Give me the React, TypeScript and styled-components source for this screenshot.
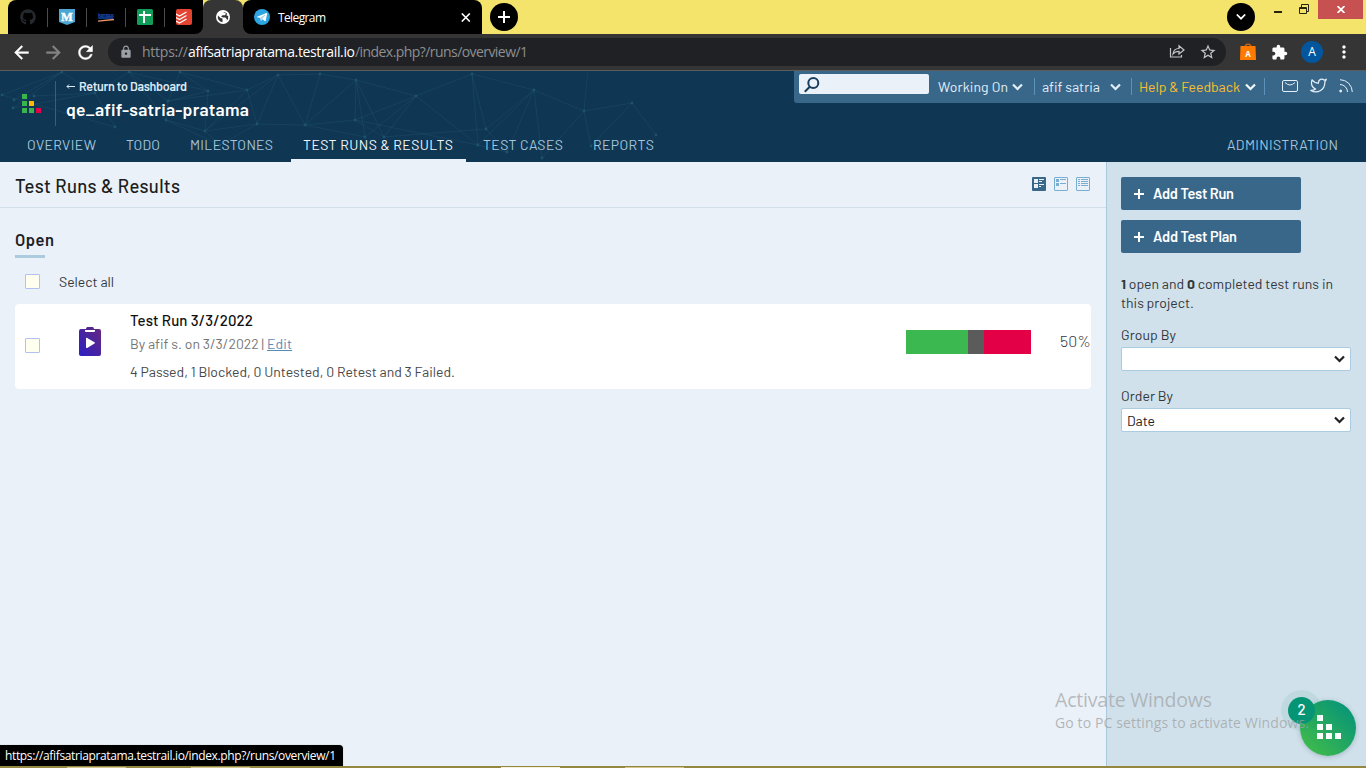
import React, { useLayoutEffect, useRef, useState } from "react";
import styled, { createGlobalStyle } from "styled-components";
import { MdArrowBack, MdArrowForward, MdRefresh, MdLock, MdStarBorder, MdExtension, MdMoreVert } from "react-icons/md";
import { FaGithub } from "react-icons/fa";
import { FiTwitter } from "react-icons/fi";

const ui = `"Barlow", Roboto, "Liberation Sans", sans-serif`;
const chrome = `"Segoe UI", "Open Sans", "Noto Sans", sans-serif`;

const GlobalStyle = createGlobalStyle`
  *, *::before, *::after { box-sizing: border-box; }
  html, body { margin: 0; padding: 0; overflow: hidden; }
  body { font-family: ${ui}; font-size: 14px; color: #33373c; background: #eaf1f8; }
  svg { display: block; flex: none; }
`;

/* Label that tracks its letters so the text fills a given width. */
const LabelBox = styled.span<{ $w: number }>`
  display: inline-block;
  width: ${(p) => p.$w}px;
  white-space: pre;
  flex: none;
`;
function Label({ w, children }: { w: number; children: React.ReactNode }) {
  const ref = useRef<HTMLSpanElement>(null);
  const [spacing, setSpacing] = useState(0);
  useLayoutEffect(() => {
    const el = ref.current;
    if (!el) return;
    const n = (el.textContent || "").length;
    if (n > 1) setSpacing((w - el.getBoundingClientRect().width) / (n - 1));
  }, [w]);
  return (
    <LabelBox $w={w}>
      <span ref={ref} style={{ letterSpacing: spacing }}>{children}</span>
    </LabelBox>
  );
}

const Screen = styled.div`
  position: relative;
  display: flex;
  flex-direction: column;
  width: 1366px;
  height: 768px;
  overflow: hidden;
`;

/* ---------- browser ---------- */
const TabStrip = styled.div`
  display: flex;
  height: 34px;
  padding-left: 8px;
  background: #f5e46c;
  font-family: ${chrome};
`;
const PinnedGroup = styled.div`
  display: flex;
  width: 195px;
  background: #000;
  border-radius: 8px 0 8px 0;
`;
const PinnedTab = styled.div`
  display: flex;
  align-items: center;
  justify-content: center;
  width: 39px;
  height: 34px;
  position: relative;
  & + &::before {
    content: "";
    position: absolute;
    left: 0;
    top: 8px;
    width: 1px;
    height: 19px;
    background: #4b4b4b;
  }
`;
const TabsBack = styled.div`
  display: flex;
  background: linear-gradient(#353535, #353535) 180px 8px / 80px 26px no-repeat;
`;
const CurrentTab = styled.div`
  display: flex;
  align-items: center;
  justify-content: center;
  width: 40px;
  background: #353535;
  border-radius: 8px 8px 0 0;
`;
const WideTab = styled.div`
  display: flex;
  align-items: center;
  width: 239px;
  padding: 0 10px 0 11px;
  background: #000;
  border-radius: 8px 8px 0 8px;
  color: #fff;
  font-size: 12px;
`;
const TabTitle = styled.div`
  flex: 1;
  padding-left: 8px;
`;
const RoundButton = styled.div<{ $ml: number }>`
  display: flex;
  align-items: center;
  justify-content: center;
  width: 28px;
  height: 28px;
  margin: 3px 0 0 ${(p) => p.$ml}px;
  border-radius: 50%;
  background: #000;
`;
const WindowButtons = styled.div`
  display: flex;
  margin-left: 17px;
`;
const CloseWindow = styled.div`
  display: flex;
  align-items: center;
  justify-content: center;
  width: 45px;
  height: 19px;
  background: #c75050;
`;
const Toolbar = styled.div`
  display: flex;
  align-items: center;
  height: 37px;
  padding-left: 11px;
  background: #353535;
  border-bottom: 1px solid #5b5b5b;
  font-family: ${chrome};
  color: #fff;
`;
const NavIcon = styled.div<{ $dim?: boolean }>`
  width: 32px;
  color: ${(p) => (p.$dim ? "#858585" : "#fff")};
  svg path:last-child { stroke: currentColor; stroke-width: 0.5px; }
`;
const AddressBar = styled.div`
  display: flex;
  align-items: center;
  width: 1118px;
  height: 28px;
  margin-left: 1px;
  padding: 0 9px 0 11px;
  border-radius: 14px;
  background: #202124;
  color: #9aa0a6;
  font-size: 14px;
`;
const Url = styled.div`
  display: flex;
  flex: 1;
  padding-left: 9px;
  margin-top: -1px;
  color: #8d8f93;
`;
const Domain = styled.span`
  color: #fff;
`;
const AddressIcons = styled.div`
  display: flex;
  gap: 14px;
  color: #c4c6c9;
`;
const Extensions = styled.div`
  display: flex;
  align-items: center;
  padding-left: 13px;
`;
const PuzzleSlot = styled.div`
  margin-left: 14px;
`;
const Avatar = styled.div`
  width: 22px;
  height: 22px;
  margin: 0 11px 0 13px;
  border-radius: 50%;
  background: #02569e;
  font-size: 12px;
  line-height: 22px;
  text-align: center;
`;

/* ---------- application header ---------- */
const Header = styled.header`
  position: relative;
  height: 91px;
  background: #0f3652;
  flex: none;
`;
const Network = styled.svg`
  position: absolute;
  left: 0;
  top: 0;
`;
const HeaderTop = styled.div`
  position: relative;
  display: flex;
  height: 57px;
  padding-left: 22px;
`;
const Logo = styled.svg`
  margin-top: 23px;
`;
const ProjectInfo = styled.div`
  height: 45px;
  margin: 10px 0 0 13px;
  padding-left: 10px;
  border-left: 1px solid #33617f;
  color: #fff;
`;
const BackLink = styled.div`
  display: flex;
  align-items: center;
  gap: 4px;
  margin-top: -3px;
  font-size: 12.5px;
  font-weight: 600;
  line-height: 17px;
  color: #dce9f5;
`;
const ProjectName = styled.div`
  margin-top: 3px;
  font-size: 17.5px;
  font-weight: 600;
  line-height: 22px;
`;
const UtilityBar = styled.div`
  display: flex;
  align-items: center;
  width: 572px;
  height: 32px;
  margin-left: auto;
  padding-left: 5px;
  background: #38678a;
  border-bottom-left-radius: 3px;
  color: #dce9f5;
  font-size: 14px;
`;
const SearchBox = styled.div`
  width: 130px;
  height: 20px;
  margin: -6px 9px 0 0;
  padding: 3px 0 0 5px;
  border-radius: 2px;
  background: #eaf1f8;
`;
const UtilityItem = styled.div<{ $w: number; $pr?: number; $accent?: boolean }>`
  display: flex;
  align-items: center;
  justify-content: space-between;
  width: ${(p) => p.$w}px;
  height: 18px;
  padding-right: ${(p) => p.$pr ?? 11}px;
  line-height: 18px;
  color: ${(p) => (p.$accent ? "#fbc02a" : "#e3eef8")};
  & > span { margin-top: -1px; }
`;
const HelpArrow = styled.div`
  color: #f2f7fb;
`;
const Separator = styled.div<{ $mr: number }>`
  width: 1px;
  height: 17px;
  margin: -1px ${(p) => p.$mr}px 0 0;
  background: #5c93bb;
`;
const SocialIcons = styled.div`
  display: flex;
  align-items: center;
  gap: 12px;
  margin-top: -3px;
  color: #e6f0f8;
`;
const Nav = styled.nav`
  position: relative;
  display: flex;
  height: 34px;
  padding: 0 15px;
`;
const NavTab = styled.div<{ $active?: boolean; $end?: boolean }>`
  height: 34px;
  padding: 0 13px 0 12px;
  margin-right: 5px;
  ${(p) => p.$end && "margin-left: auto; margin-right: 0;"}
  line-height: 33px;
  border-bottom: 3px solid ${(p) => (p.$active ? "#eaf1f8" : "transparent")};
  color: ${(p) => (p.$active ? "#f2f7fb" : "#a4c5dc")};
`;

/* ---------- page ---------- */
const Page = styled.div`
  display: flex;
  height: 604px;
`;
const Main = styled.main`
  width: 1106px;
  background: #eaf1f8;
`;
const TitleBar = styled.div`
  display: flex;
  align-items: center;
  justify-content: space-between;
  height: 46px;
  padding: 1px 16px 0 15px;
  border-bottom: 1px solid #d2dfe9;
  color: #1b1d20;
  font-size: 18.5px;
  font-weight: 500;
`;
const ViewIcons = styled.div`
  display: flex;
  gap: 8px;
  margin-top: -3px;
`;
const Runs = styled.section`
  padding: 22px 15px 0;
`;
const GroupTitle = styled.h2`
  display: flex;
  flex-direction: column;
  height: 28px;
  margin: 0;
  font-size: 16.5px;
  line-height: 19px;
  font-weight: 600;
  color: #1d2126;
  &::after {
    content: "";
    width: 30px;
    height: 3px;
    margin-top: 6px;
    background: #adcbdf;
  }
`;
const SelectAll = styled.div`
  display: flex;
  align-items: center;
  gap: 19px;
  height: 15px;
  margin: 16px 0 15px;
  padding-left: 10px;
`;
const Checkbox = styled.div`
  width: 15px;
  height: 15px;
  border: 1px solid #b3c0f2;
  border-radius: 1px;
  background: #fffff0;
`;
const RunCard = styled.div`
  display: flex;
  align-items: flex-start;
  height: 85px;
  padding-left: 10px;
  border-radius: 4px;
  background: #fff;
  ${Checkbox} { margin-top: 34px; }
`;
const RunIcon = styled.svg`
  margin: 23px 0 0 39px;
`;
const RunInfo = styled.div`
  flex: 1;
  padding: 6px 0 0 29px;
`;
const RunTitle = styled.div`
  font-size: 15px;
  font-weight: 500;
  line-height: 20px;
  color: #111;
`;
const RunMeta = styled.div`
  display: flex;
  margin-top: 4px;
  line-height: 20px;
  color: #757575;
  gap: 3px;
`;
const EditLink = styled.span`
  color: #578db8;
  span { text-decoration: underline; }
`;
const RunStats = styled.div`
  margin-top: 8px;
  line-height: 20px;
  color: #484848;
`;
const Progress = styled.div`
  display: flex;
  width: 125px;
  height: 24px;
  margin: 26px 29px 0 0;
`;
const Segment = styled.div<{ $w: number; $color: string }>`
  width: ${(p) => p.$w}px;
  background: ${(p) => p.$color};
`;
const Percent = styled.div`
  width: 31px;
  margin-top: 27px;
  font-size: 16px;
  font-weight: 300;
  line-height: 20px;
`;
const Sidebar = styled.aside`
  width: 260px;
  padding: 15px 15px 0 14px;
  border-left: 1px solid #aac8dc;
  background: #d1e1eb;
`;
const AddButton = styled.div`
  display: flex;
  align-items: center;
  gap: 9px;
  width: 180px;
  height: 33px;
  margin-bottom: 10px;
  padding-left: 13px;
  border-radius: 2px;
  background: #38678a;
  color: #fff;
  font-size: 14.5px;
  font-weight: 600;
  line-height: 18px;
  & > span { margin-top: -1px; }
`;
const Summary = styled.div`
  margin: 21px 0 13px;
  line-height: 19px;
`;
const FieldLabel = styled.div`
  height: 22px;
  line-height: 19px;
`;
const Select = styled.div`
  display: flex;
  align-items: center;
  justify-content: space-between;
  width: 230px;
  height: 24px;
  margin-bottom: 15px;
  padding: 2px 5px 0 5px;
  border: 1px solid #aacbe2;
  border-radius: 2px;
  background: #fff;
  color: #222;
  line-height: 20px;
  svg { margin: -2px 0 0 auto; }
`;

/* ---------- overlays ---------- */
const ChatButton = styled.div`
  position: absolute;
  left: 1300px;
  top: 700px;
  display: flex;
  width: 56px;
  height: 56px;
  padding: 15px 0 0 17px;
  border-radius: 50%;
  background: linear-gradient(45deg, #3cb84e 15%, #0a9775 85%);
  box-shadow: 0 1px 5px rgba(20, 60, 90, 0.25);
`;
const ChatBadge = styled.div`
  position: absolute;
  left: 1288px;
  top: 697px;
  width: 27px;
  height: 27px;
  border-radius: 50%;
  background: #069574;
  box-shadow: 0 0 0 7px rgba(6, 149, 116, 0.09);
  color: #fff;
  font: 500 15px/25px ${ui};
  text-align: center;
`;
const Watermark = styled.div`
  position: absolute;
  left: 1055px;
  top: 687px;
  color: rgba(158, 161, 164, 0.75);
  font-family: ${chrome};
  font-size: 14px;
  line-height: 19px;
`;
const WatermarkTitle = styled.div`
  font-size: 19.5px;
  line-height: 26px;
  color: rgba(158, 161, 164, 0.7);
`;
const StatusBubble = styled.div`
  position: absolute;
  left: 0;
  top: 745px;
  width: 343px;
  height: 21px;
  padding-left: 5px;
  border-top-right-radius: 4px;
  background: #000;
  color: #fff;
  box-shadow: 0 0 1px #8b959b;
  font: 12px/21px ${chrome};
`;
const Taskbar = styled.div`
  display: flex;
  gap: 65px;
  height: 2px;
  padding: 1px 0 0 67px;
  background: #94873f;
`;
const TaskItem = styled.div<{ $open?: boolean; $ml?: number }>`
  width: 59px;
  height: 1px;
  margin-left: ${(p) => p.$ml || 0}px;
  background: ${(p) => (p.$open ? "#f5f1dc" : "#d2c58d")};
`;

const Chevron = ({ w = 11, sw = 2.2 }: { w?: number; sw?: number }) => (
  <svg width={w} height={w * 0.7} viewBox="0 0 11 7.7" fill="none" stroke="currentColor" strokeWidth={sw}>
    <path d="M1 1.5 5.5 6 10 1.5" />
  </svg>
);
const Plus = () => (
  <svg width="10" height="10" viewBox="0 0 10 10" stroke="#fff" strokeWidth="2"><path d="M5 0v10M0 5h10" /></svg>
);

const nodes = [[62,1],[129,1],[180,1],[278,4],[320,3],[2,24],[14,29],[13,37],[34,25],[95,22],[208,20],[247,19],[168,30],[115,56],[166,49],[205,60],[257,53],[305,54],[356,9],[416,25],[472,3],[534,19],[355,49],[365,66],[384,66],[486,58],[584,40],[632,32],[656,64],[591,75],[542,87],[478,74],[507,81],[588,-2],[220,74]];
const links = [[0,5],[0,6],[0,7],[0,9],[1,9],[1,12],[1,14],[1,10],[2,10],[2,12],[2,11],[5,13],[8,9],[9,13],[7,9],[10,12],[10,15],[12,14],[12,11],[11,15],[11,16],[3,11],[3,15],[3,16],[3,17],[3,4],[4,17],[4,18],[16,17],[17,18],[17,22],[17,23],[18,19],[18,22],[18,23],[18,24],[19,22],[19,23],[19,24],[19,31],[20,19],[20,21],[20,25],[20,31],[21,25],[21,26],[21,31],[21,32],[21,30],[22,24],[22,31],[24,25],[25,32],[26,30],[26,29],[26,27],[26,33],[27,28],[27,29],[31,32],[14,15],[14,34],[15,34],[16,34],[15,16]];

function AppHeader() {
  return (
    <Header>
      <Network width="680" height="91" viewBox="0 0 680 91">
        <g stroke="#2d6783" strokeOpacity=".25">
          {links.map(([a, b], i) => (
            <line key={i} x1={nodes[a][0]} y1={nodes[a][1]} x2={nodes[b][0]} y2={nodes[b][1]} />
          ))}
        </g>
        {nodes.map(([x, y], i) => <circle key={i} cx={x} cy={y} r="1.400" fill="#1f5270" />)}
      </Network>
      <HeaderTop>
        <Logo width="20" height="19" viewBox="0 0 20 19">
          <path fill="#38b64b" d="M0 0h5v5H0zM0 7h5v5H0zM0 14h5v5H0zM7 14h5v5H7z" />
          <path fill="#ffb800" d="M7 7h5v5H7z" />
          <path fill="#e40046" d="M14 14h5v5h-5z" />
        </Logo>
        <ProjectInfo>
          <BackLink>
            <svg width="9" height="7" viewBox="0 0 9 7" fill="none" stroke="currentColor"><path d="M9 3.500H1M3 1.500 1 3.500 3 5.500" /></svg>
            <Label w={108}>Return to Dashboard</Label>
          </BackLink>
          <ProjectName><Label w={183}>qe_afif-satria-pratama</Label></ProjectName>
        </ProjectInfo>
        <UtilityBar>
          <SearchBox>
            <svg width="16" height="16" viewBox="0 0 16 16" fill="none" stroke="#173e5c" strokeWidth="2"><circle cx="9.300" cy="6" r="5" /><path d="M5.800 9.700.8 14.800" /></svg>
          </SearchBox>
          <UtilityItem $w={96}><Label w={70}>Working On</Label><Chevron /></UtilityItem>
          <Separator $mr={7} />
          <UtilityItem $w={89} $pr={10}><Label w={58}>afif satria</Label><Chevron /></UtilityItem>
          <Separator $mr={7} />
          <UtilityItem $w={125} $pr={8} $accent><Label w={101}>Help &amp; Feedback</Label><HelpArrow><Chevron /></HelpArrow></UtilityItem>
          <Separator $mr={17} />
          <SocialIcons>
            <svg width="16" height="12" viewBox="0 0 16 12" fill="none" stroke="currentColor"><rect x=".5" y=".5" width="15" height="11" rx="1.500" /><path d="M3 2.500Q8 7.500 13 2.500" /></svg>
            <FiTwitter size={17} strokeWidth={1.7} />
            <svg width="14" height="14" viewBox="0 0 14 14" fill="none" stroke="currentColor"><path d="M1 .7A12.300 12.300 0 0 1 13.300 13M1 5.500A7.500 7.500 0 0 1 8.500 13" /><circle cx="1.700" cy="12" r="1" fill="currentColor" /></svg>
          </SocialIcons>
        </UtilityBar>
      </HeaderTop>
      <Nav>
        <NavTab><Label w={69}>OVERVIEW</Label></NavTab>
        <NavTab><Label w={34}>TODO</Label></NavTab>
        <NavTab><Label w={83}>MILESTONES</Label></NavTab>
        <NavTab $active><Label w={150}>TEST RUNS &amp; RESULTS</Label></NavTab>
        <NavTab><Label w={80}>TEST CASES</Label></NavTab>
        <NavTab><Label w={61}>REPORTS</Label></NavTab>
        <NavTab $end><Label w={111}>ADMINISTRATION</Label></NavTab>
      </Nav>
    </Header>
  );
}

function Browser() {
  return (
    <>
      <TabStrip>
        <TabsBack>
          <PinnedGroup>
            <PinnedTab><FaGithub size={16} color="#24292e" /></PinnedTab>
            <PinnedTab>
              <svg width="16" height="16" viewBox="0 0 16 16"><path fill="#4aa7d4" d="M0 0h16v13l-8 3-8-3z" /><text x="8" y="11.500" textAnchor="middle" fontFamily="Liberation Serif" fontWeight="700" fontSize="12.500" fill="#fff" stroke="#fff" strokeWidth=".4">M</text></svg>
            </PinnedTab>
            <PinnedTab>
              <svg width="18" height="10" viewBox="0 0 18 10"><text x="1" y="4.500" fontFamily="Roboto" fontWeight="700" fontSize="5.500" textLength="16" fill="#1c4a9b">kampus</text><path fill="#0d3280" d="M1 5h15v2H1z" /><path stroke="#e5966a" strokeWidth="1.300" d="M1 9.200 17 7.500" /></svg>
            </PinnedTab>
            <PinnedTab>
              <svg width="16" height="16" viewBox="0 0 16 16"><rect width="16" height="16" rx="1.500" fill="#109d58" /><path stroke="#fff" strokeWidth="2" d="M2 6h12M7 2v12" /></svg>
            </PinnedTab>
            <PinnedTab>
              <svg width="16" height="16" viewBox="0 0 16 16" fill="none"><rect width="16" height="16" rx="2" fill="#e44332" /><path stroke="#fff" strokeWidth="1.200" d="m0 5 3.500 2 7-4M0 8.500l3.500 2 7-4M0 12l3.500 2 7-4" /></svg>
            </PinnedTab>
          </PinnedGroup>
          <CurrentTab>
            <svg width="14" height="14" viewBox="0 0 14 14"><circle cx="7" cy="7" r="7" fill="#fff" /><path fill="#353535" d="M2 5.500 4.500 8l2 .5v3.700A5.200 5.200 0 0 1 2 5.500zM7 2l3 1.500-1 1.700H6.500L5 6.500l2 1h2.500L11 9.500l-.5 1.500A5.300 5.300 0 0 0 12.200 6l-1.700-.5.5-2A5 5 0 0 0 7 2z" /></svg>
          </CurrentTab>
          <WideTab>
            <svg width="16" height="16" viewBox="0 0 16 16"><circle cx="8" cy="8" r="8" fill="#2ca5e0" /><path fill="#fff" d="M3 7.800 12.500 4c.5-.2.8.1.7.6l-1.500 7.100c-.1.500-.5.600-.9.300L8.500 10.300l-1.200 1.200c-.3.300-.6.200-.6-.2L6.500 9 3.100 8.200c-.3-.1-.3-.3-.1-.4z" /><path stroke="#a8cfe6" strokeWidth=".8" d="M6.600 9 11 6l-3.300 3.700-.7 1.300z" fill="#a8cfe6" /></svg>
            <TabTitle><Label w={48}>Telegram</Label></TabTitle>
            <svg width="13" height="9" viewBox="-2 0 13 9" stroke="#fff" strokeWidth="1.600"><path d="m.8.5 8 8m0-8-8 8" /></svg>
          </WideTab>
        </TabsBack>
        <RoundButton $ml={8}>
          <svg width="12" height="12" viewBox="0 0 12 12" stroke="#fff" strokeWidth="2"><path d="M6 0v12M0 6h12" /></svg>
        </RoundButton>
        <RoundButton $ml={709}>
          <svg width="10" height="6" viewBox="0 0 10 6" fill="none" stroke="#fff" strokeWidth="1.700"><path d="m.8.5 4.200 4.200L9.200.5" /></svg>
        </RoundButton>
        <WindowButtons>
          <svg width="46" height="19" viewBox="0 0 46 19" fill="none" stroke="#26240f"><path strokeWidth="2" d="M2 12h8" /><path d="M27.500 7.500h7v6h-7zM27 8.500h8M29.500 7V4.500h7v7H35" /></svg>
          <CloseWindow>
            <svg width="8" height="7" viewBox="0 0 8 7" stroke="#fff" strokeWidth="1.700"><path d="m.5 0 7 7m0-7-7 7" /></svg>
          </CloseWindow>
        </WindowButtons>
      </TabStrip>
      <Toolbar>
        <NavIcon><MdArrowBack size={21} /></NavIcon>
        <NavIcon $dim><MdArrowForward size={21} /></NavIcon>
        <NavIcon><MdRefresh size={21} /></NavIcon>
        <AddressBar>
          <MdLock size={14} />
          <Url>
            <Label w={46}>https://</Label>
            <Domain><Label w={167}>afifsatriapratama.testrail.io</Label></Domain>
            <Label w={173}>/index.php?/runs/overview/1</Label>
          </Url>
          <AddressIcons>
            <svg width="16" height="16" viewBox="0 0 16 16" fill="none" stroke="currentColor" strokeWidth="1.200"><path d="M1.500 5v9h11v-2M4 11c.5-4 2.500-5.500 6-5.500V2.800L15 7l-5 4V8.300c-3 0-4.500.7-6 2.700z" /></svg>
            <MdStarBorder size={18} />
          </AddressIcons>
        </AddressBar>
        <Extensions>
          <svg width="18" height="18" viewBox="0 0 18 18"><path fill="none" stroke="#d4670b" strokeWidth="1.300" d="M6 4.500c0-4.500 6-4.500 6 0" /><path fill="#ff7a00" d="M1.500 3h15l.5 14H1z" /><text x="9" y="13.500" textAnchor="middle" fontFamily="Open Sans" fontWeight="700" fontSize="8" fill="#fff">A</text></svg>
          <PuzzleSlot><MdExtension size={17} /></PuzzleSlot>
          <Avatar>A</Avatar>
          <MdMoreVert size={20} />
        </Extensions>
      </Toolbar>
    </>
  );
}

export default function App() {
  return (
    <Screen>
      <GlobalStyle />
      <Browser />
      <AppHeader />
      <Page>
        <Main>
          <TitleBar>
            <Label w={165}>Test Runs &amp; Results</Label>
            <ViewIcons>
              <svg width="14" height="14" viewBox="0 0 14 14"><rect width="14" height="14" rx="1" fill="#38678a" /><path fill="#eaf1f8" d="M2 2h4v4H2zM2 7h4v4H2zM7 2h5v1H7zM7 4h3v1H7zM7 7h5v1H7zM7 9h2v1H7z" /></svg>
              <svg width="14" height="14" viewBox="0 0 14 14"><rect x=".5" y=".5" width="13" height="13" rx=".5" fill="none" stroke="#7badd0" /><path fill="#7badd0" d="M2 2h3v3H2zM2 6h3v3H2zM6 2h6v1H6zM6 6h6v1H6z" /></svg>
              <svg width="14" height="14" viewBox="0 0 14 14"><rect x=".5" y=".5" width="13" height="13" rx=".5" fill="none" stroke="#7badd0" /><path fill="#7badd0" d="M2 2h2v1H2zM5 2h7v1H5zM2 4h2v1H2zM5 4h7v1H5zM2 6h2v1H2zM5 6h7v1H5zM2 8h2v1H2zM5 8h7v1H5z" /></svg>
            </ViewIcons>
          </TitleBar>
          <Runs>
            <GroupTitle><Label w={39}>Open</Label></GroupTitle>
            <SelectAll><Checkbox /><Label w={55}>Select all</Label></SelectAll>
            <RunCard>
              <Checkbox />
              <RunIcon width="22" height="29" viewBox="0 0 22 29">
                <defs><linearGradient id="run" x1="0" y1="1" x2="1" y2="0"><stop stopColor="#2c1fc4" /><stop offset="1" stopColor="#66297c" /></linearGradient></defs>
                <path fill="url(#run)" d="M2 2h5a4 2.500 0 0 1 8 0h5a2 2 0 0 1 2 2v23a2 2 0 0 1-2 2H2a2 2 0 0 1-2-2V4a2 2 0 0 1 2-2z" />
                <path fill="#fff" d="M6 3h10v1a1 1 0 0 1-1 1H7a1 1 0 0 1-1-1zM7 11.500c0-.8.500-1 1.200-.6l7.300 4.400c.6.400.6.800 0 1.200l-7.300 4.400c-.7.400-1.200.1-1.200-.6z" />
              </RunIcon>
              <RunInfo>
                <RunTitle><Label w={123}>Test Run 3/3/2022</Label></RunTitle>
                <RunMeta><Label w={134}>By afif s. on 3/3/2022 |</Label><EditLink><Label w={25}>Edit</Label></EditLink></RunMeta>
                <RunStats><Label w={325}>4 Passed, 1 Blocked, 0 Untested, 0 Retest and 3 Failed.</Label></RunStats>
              </RunInfo>
              <Progress>
                <Segment $w={62} $color="#3cb850" />
                <Segment $w={16} $color="#5b5b5b" />
                <Segment $w={47} $color="#e40046" />
              </Progress>
              <Percent><Label w={31}>50%</Label></Percent>
            </RunCard>
          </Runs>
        </Main>
        <Sidebar>
          <AddButton><Plus /><Label w={81}>Add Test Run</Label></AddButton>
          <AddButton><Plus /><Label w={84}>Add Test Plan</Label></AddButton>
          <Summary>
            <Label w={212}><b>1</b> open and <b>0</b> completed test runs in</Label>
            <Label w={73}>this project.</Label>
          </Summary>
          <FieldLabel><Label w={55}>Group By</Label></FieldLabel>
          <Select><Chevron /></Select>
          <FieldLabel><Label w={52}>Order By</Label></FieldLabel>
          <Select><Label w={28}>Date</Label><Chevron /></Select>
        </Sidebar>
      </Page>
      <Taskbar>
        <TaskItem />
        <TaskItem />
        <TaskItem $open $ml={186} />
        <TaskItem />
      </Taskbar>
      <ChatButton>
        <svg width="24" height="24" viewBox="0 0 24 24" fill="#fff"><path d="M0 0h6v6H0zM0 9h6v6H0zM9 9h6v6H9zM0 18h6v6H0zM9 18h6v6H9zM18 18h6v6h-6z" /></svg>
      </ChatButton>
      <ChatBadge>2</ChatBadge>
      <Watermark>
        <WatermarkTitle><Label w={157}>Activate Windows</Label></WatermarkTitle>
        <Label w={254}>Go to PC settings to activate Windows.</Label>
      </Watermark>
      <StatusBubble><Label w={331}>https://afifsatriapratama.testrail.io/index.php?/runs/overview/1</Label></StatusBubble>
    </Screen>
  );
}
